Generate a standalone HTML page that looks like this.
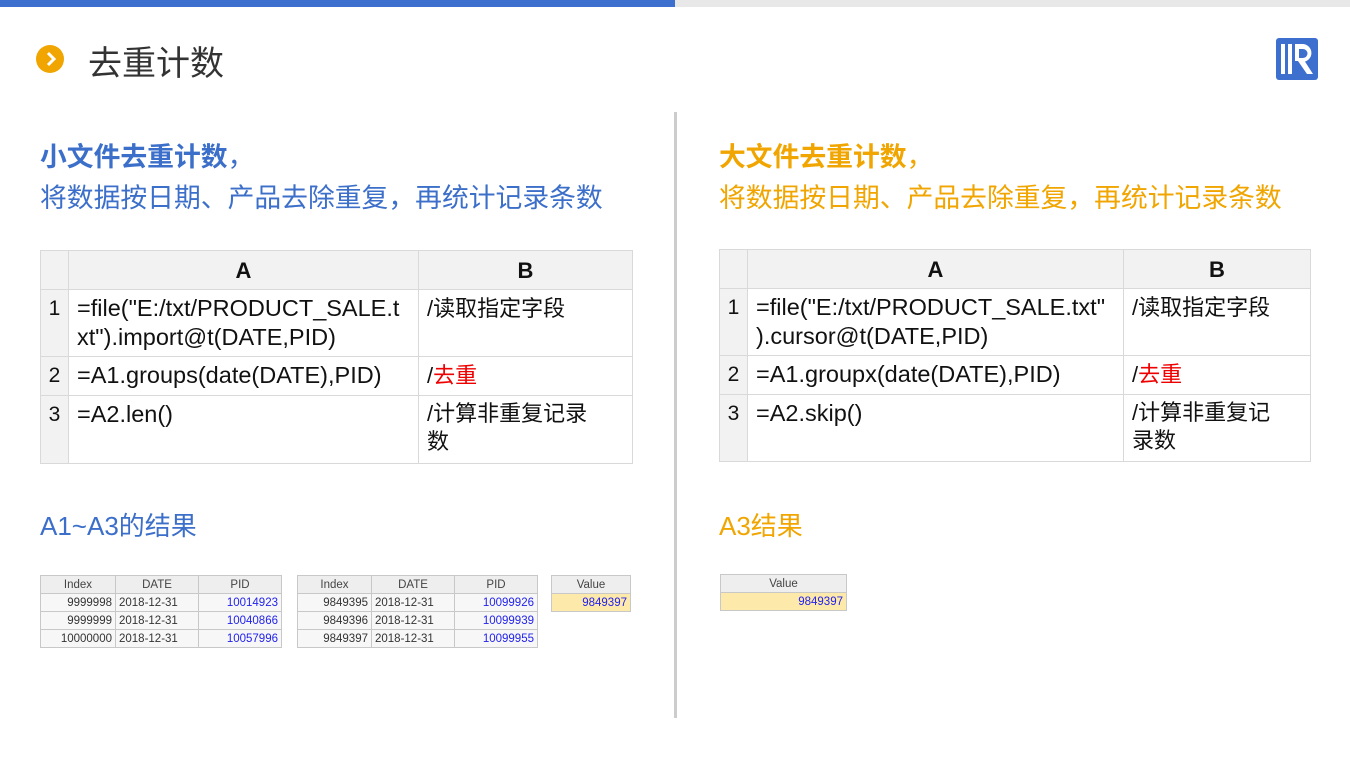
<!DOCTYPE html><html><head><meta charset="utf-8"><style>
*{margin:0;padding:0;box-sizing:border-box}
body{width:1350px;height:759px;background:#fff;position:relative;overflow:hidden;font-family:"Liberation Sans","Noto Sans CJK SC",sans-serif}
.a{position:absolute}
table{border-collapse:collapse;position:absolute;font-size:23.5px;color:#111}
.big td{border:1px solid #d9d9d9;vertical-align:top;padding:4px 8px;line-height:29px}
.big tr:first-child td{background:#f2f2f2;text-align:center;font-weight:bold;vertical-align:middle;font-size:22px}
.big td:first-child{background:#f2f2f2;text-align:center;padding:4px 0;font-size:21px}
.c{font-size:22px}
.sm{font-size:11.5px;color:#333}
.sm td{border:1px solid #c8c8c8;height:18px;padding:0 3px;line-height:16px;background:#f7f7f7}
.sm tr:first-child td{text-align:center;background:#eee;color:#444}
.r{text-align:right}.p{color:#2222ee;text-align:right}
</style></head><body>
<div class="a" style="left:0;top:0;width:675px;height:7px;background:#3d6fcf"></div>
<div class="a" style="left:675px;top:0;width:675px;height:7px;background:#e8e8e8"></div>
<div class="a" style="left:36px;top:45px;width:28px;height:28px;border-radius:50%;background:#f0a500"></div>
<svg class="a" style="left:36px;top:45px" width="28" height="28"><path d="M12 8l6 6-6 6" stroke="#fff" stroke-width="3" fill="none"/></svg>
<div class="a" style="left:88px;top:36px;font-size:34px;color:#333">去重计数</div>
<svg class="a" style="left:1276px;top:38px" width="42" height="42"><rect width="42" height="42" rx="3" fill="#3d6fcf"/><rect x="5" y="6" width="4" height="30" fill="#fff"/><rect x="12" y="6" width="4" height="30" fill="#fff"/><path d="M19 6h8a9 9 0 0 1 2 17.6l8 12.4h-6l-9-13h-3z" fill="#fff"/><path d="M23 11h4a4.5 4.5 0 0 1 0 9h-4z" fill="#3d6fcf"/></svg>
<div class="a" style="left:674px;top:112px;width:3px;height:606px;background:#ccc"></div>
<div class="a" style="left:40px;top:137px;font-size:26.8px;color:#3c6fc9;line-height:41px"><b>小文件去重计数</b>，<br>将数据按日期、产品去除重复，再统计记录条数</div>
<div class="a" style="left:719px;top:137px;font-size:26.8px;color:#f0a500;line-height:41px"><b>大文件去重计数</b>，<br>将数据按日期、产品去除重复，再统计记录条数</div>
<table class="big" style="left:40px;top:250px;width:593px">
<tr style="height:39px"><td style="width:28px"></td><td style="width:350px">A</td><td>B</td></tr>
<tr style="height:67px"><td>1</td><td>=file("E:/txt/PRODUCT_SALE.t xt").import@t(DATE,PID)</td><td class="c">/读取指定字段</td></tr>
<tr style="height:39px"><td>2</td><td>=A1.groups(date(DATE),PID)</td><td class="c">/<span style="color:#e00">去重</span></td></tr>
<tr style="height:68px"><td>3</td><td>=A2.len()</td><td class="c" style="line-height:28px;padding-right:30px">/计算非重复记录<br>数</td></tr>
</table>
<table class="big" style="left:719px;top:249px;width:592px">
<tr style="height:39px"><td style="width:28px"></td><td style="width:376px">A</td><td>B</td></tr>
<tr style="height:67px"><td>1</td><td>=file("E:/txt/PRODUCT_SALE.txt" ).cursor@t(DATE,PID)</td><td class="c">/读取指定字段</td></tr>
<tr style="height:39px"><td>2</td><td>=A1.groupx(date(DATE),PID)</td><td class="c">/<span style="color:#e00">去重</span></td></tr>
<tr style="height:67px"><td>3</td><td>=A2.skip()</td><td class="c" style="line-height:28px;padding-right:20px">/计算非重复记<br>录数</td></tr>
</table>
<div class="a" style="left:40px;top:506px;font-size:26px;color:#3c6fc9">A1~A3的结果</div>
<div class="a" style="left:719px;top:506px;font-size:26px;color:#f0a500">A3结果</div>
<table class="sm" style="left:40px;top:575px;width:242px">
<tr><td style="width:75px">Index</td><td style="width:83px">DATE</td><td>PID</td></tr>
<tr><td class="r">9999998</td><td>2018-12-31</td><td class="p">10014923</td></tr>
<tr><td class="r">9999999</td><td>2018-12-31</td><td class="p">10040866</td></tr>
<tr><td class="r">10000000</td><td>2018-12-31</td><td class="p">10057996</td></tr>
</table>
<table class="sm" style="left:297px;top:575px;width:241px">
<tr><td style="width:74px">Index</td><td style="width:83px">DATE</td><td>PID</td></tr>
<tr><td class="r">9849395</td><td>2018-12-31</td><td class="p">10099926</td></tr>
<tr><td class="r">9849396</td><td>2018-12-31</td><td class="p">10099939</td></tr>
<tr><td class="r">9849397</td><td>2018-12-31</td><td class="p">10099955</td></tr>
</table>
<table class="sm" style="left:551px;top:575px;width:80px">
<tr><td>Value</td></tr><tr><td class="p" style="background:#fde9a9">9849397</td></tr></table>
<table class="sm" style="left:720px;top:574px;width:127px">
<tr><td>Value</td></tr><tr><td class="p" style="background:#fde9a9">9849397</td></tr></table>
</body></html>
